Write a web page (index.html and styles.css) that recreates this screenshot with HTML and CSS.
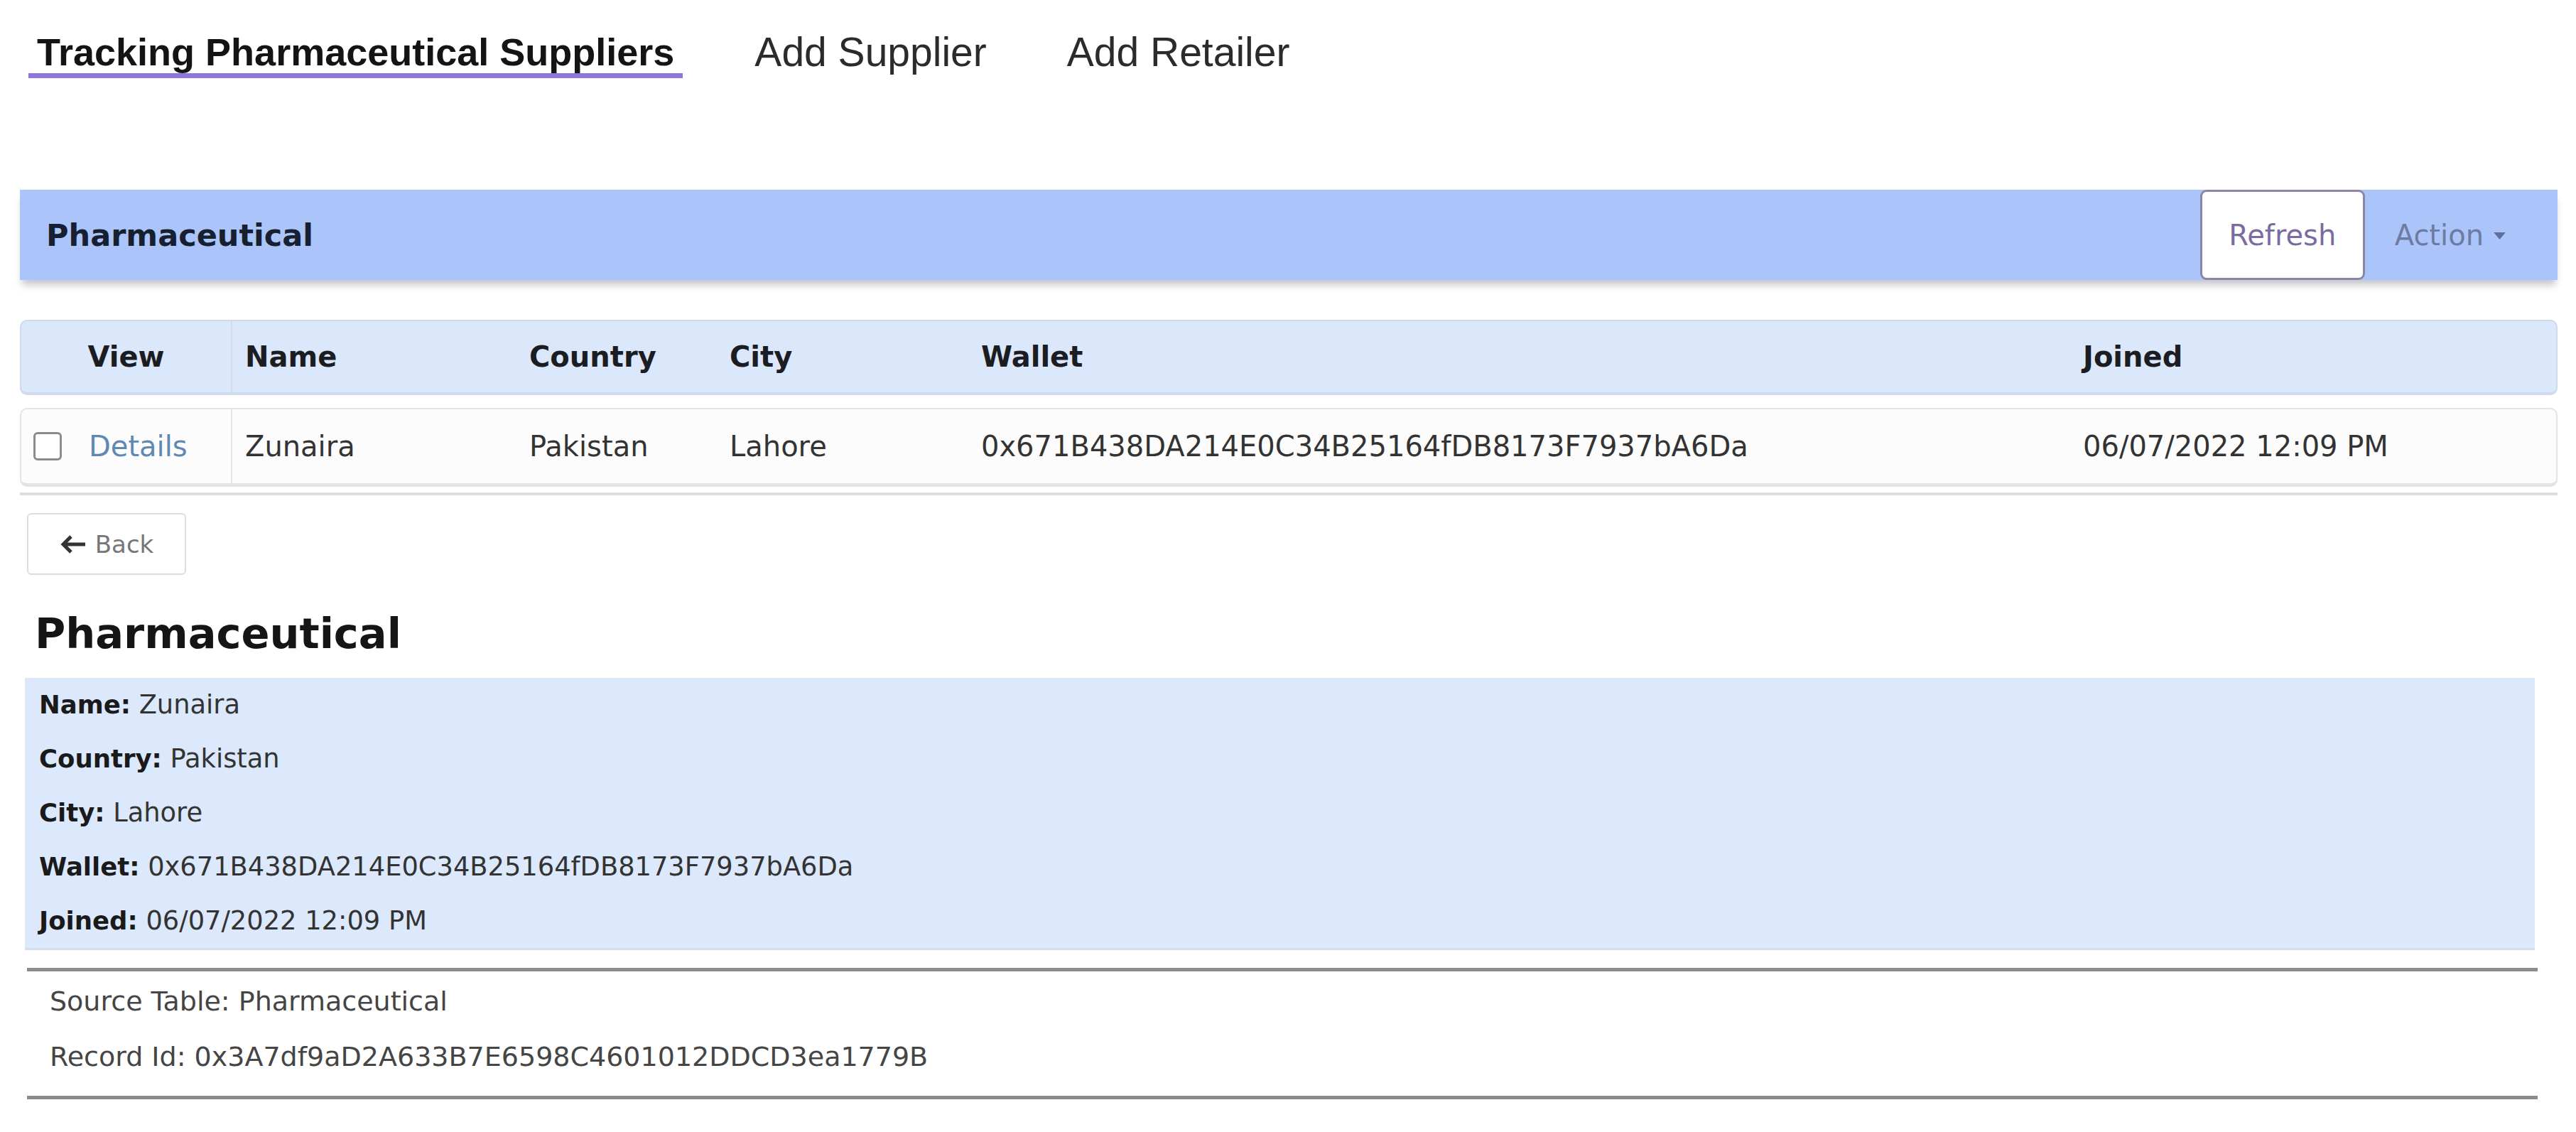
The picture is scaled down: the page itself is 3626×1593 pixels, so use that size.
FILE: index.html
```html
<!DOCTYPE html>
<html lang="en">
<head>
<meta charset="utf-8">
<title>Tracking Pharmaceutical Suppliers</title>
<link rel="stylesheet" href="styles.css">
</head>
<body>
<nav class="nav">
  <a class="nav-item active">Tracking Pharmaceutical Suppliers</a>
  <a class="nav-item">Add Supplier</a>
  <a class="nav-item">Add Retailer</a>
</nav>

<main class="panel">
  <header class="bar">
    <h1 class="bar-title">Pharmaceutical</h1>
    <div class="bar-actions">
      <button class="refresh">Refresh</button>
      <button class="action">Action
        <svg class="caret" viewBox="0 0 10 6" width="17" height="10"><path d="M0 0h10L5 6z" fill="#5f6f99"/></svg>
      </button>
    </div>
  </header>

  <section class="table">
    <div class="trow thead">
      <div class="cell view">View</div>
      <div class="cell">Name</div>
      <div class="cell">Country</div>
      <div class="cell">City</div>
      <div class="cell">Wallet</div>
      <div class="cell">Joined</div>
    </div>
    <div class="trow tbody">
      <div class="cell view left"><span class="check"></span><a class="details">Details</a></div>
      <div class="cell">Zunaira</div>
      <div class="cell">Pakistan</div>
      <div class="cell">Lahore</div>
      <div class="cell">0x671B438DA214E0C34B25164fDB8173F7937bA6Da</div>
      <div class="cell">06/07/2022 12:09 PM</div>
    </div>
    <div class="table-rule"></div>
  </section>

  <button class="back">
    <svg class="back-arrow" viewBox="0 0 38 30" width="38" height="30"><path d="M36 15H6M16 4L5 15l11 11" fill="none" stroke="#333" stroke-width="5"/></svg>
    <span>Back</span>
  </button>

  <h2 class="detail-title">Pharmaceutical</h2>

  <div class="detail-box">
    <p><b>Name:</b> Zunaira</p>
    <p><b>Country:</b> Pakistan</p>
    <p><b>City:</b> Lahore</p>
    <p><b>Wallet:</b> 0x671B438DA214E0C34B25164fDB8173F7937bA6Da</p>
    <p><b>Joined:</b> 06/07/2022 12:09 PM</p>
  </div>

  <div class="source">
    <p>Source Table: Pharmaceutical</p>
    <p>Record Id: 0x3A7df9aD2A633B7E6598C4601012DDCD3ea1779B</p>
  </div>
</main>
</body>
</html>
```

FILE: styles.css
```css
* { box-sizing: border-box; }

body {
  margin: 0;
  background: #ffffff;
  font-family: "DejaVu Sans", "Liberation Sans", sans-serif;
  color: #2a2a2a;
}

/* ---------- top navigation ---------- */
.nav {
  display: flex;
  gap: 89px;
  padding: 46px 0 0 40px;
}

.nav-item {
  font-family: "Liberation Sans", Arial, sans-serif;
  font-size: 57px;
  line-height: 54px;
  color: #2b2b2b;
  padding: 0 12px 3px;
  border-bottom: 7px solid transparent;
  white-space: nowrap;
}

.nav-item.active {
  font-weight: 700;
  font-size: 54px;
  color: #141414;
  border-bottom-color: #8e74dc;
}

/* ---------- panel ---------- */
.panel {
  margin: 157px 26px 0 28px;
}

.bar {
  height: 127px;
  display: flex;
  align-items: center;
  justify-content: space-between;
  padding-left: 37px;
  background: #abc5fa;
  box-shadow: 0 10px 10px -3px rgba(60, 70, 90, 0.3);
}

.bar-title {
  margin: 0;
  font-size: 43px;
  font-weight: 700;
  color: #172031;
}

.bar-actions {
  display: flex;
  align-self: stretch;
  align-items: stretch;
}

.refresh {
  width: 232px;
  font-family: inherit;
  font-size: 40px;
  color: #7a6ca3;
  background: #ffffff;
  border: 3px solid #8b86a8;
  border-radius: 9px;
}

.action {
  display: flex;
  align-items: center;
  gap: 14px;
  padding: 0 73px 0 42px;
  font-family: inherit;
  font-size: 40px;
  color: #6d7ba3;
  background: transparent;
  border: none;
}

.caret { margin-top: 2px; }

/* ---------- table ---------- */
.table {
  margin-top: 56px;
}

.trow {
  display: grid;
  grid-template-columns: 297px 400px 282px 354px 1551px 1fr;
  align-items: stretch;
  border-radius: 10px;
  font-size: 40px;
}

.thead {
  height: 106px;
  background: #dbe7fb;
  border: 2px solid #d0daea;
  border-bottom-width: 4px;
  font-weight: 700;
  color: #1b1d22;
}

.tbody {
  margin-top: 18px;
  height: 111px;
  background: #fcfcfc;
  border: 2px solid #e3e3e3;
  border-bottom-width: 5px;
  color: #333333;
}

.cell {
  display: flex;
  align-items: center;
  padding-left: 18px;
  white-space: nowrap;
}

.cell.view {
  justify-content: center;
  padding-left: 0;
  border-right: 2px solid #d3dbe8;
}

.tbody .cell.view {
  border-right-color: #e6e6e6;
}

.cell.view.left {
  justify-content: flex-start;
  padding-left: 17px;
}

.check {
  width: 40px;
  height: 40px;
  border: 3px solid #8c8c8c;
  border-radius: 6px;
  background: #ffffff;
  margin-right: 38px;
}

.details {
  color: #5f89b3;
}

.table-rule {
  margin-top: 8px;
  border-top: 4px solid #dedede;
}

/* ---------- back button ---------- */
.back {
  display: flex;
  align-items: center;
  justify-content: center;
  gap: 12px;
  width: 224px;
  height: 87px;
  margin: 25px 0 0 10px;
  background: #ffffff;
  border: 2px solid #dddddd;
  border-radius: 6px;
  font-family: inherit;
  font-size: 34px;
  color: #777777;
}

/* ---------- detail view ---------- */
.detail-title {
  margin: 53px 0 0 21px;
  font-size: 59px;
  line-height: 59px;
  font-weight: 700;
  color: #151515;
}

.detail-box {
  margin: 33px 32px 0 7px;
  padding-left: 20px;
  background: #dce8fb;
  border-bottom: 3px solid #d5deec;
}

.detail-box p {
  margin: 0;
  font-size: 36.8px;
  line-height: 76px;
  color: #333333;
}

.detail-box b {
  font-size: 35.5px;
  color: #1a1a1a;
}

.source {
  margin: 25px 28px 0 10px;
  padding: 3px 0 16px 32px;
  border-top: 5px solid #8c8c8c;
  border-bottom: 5px solid #8c8c8c;
}

.source p {
  margin: 0;
  font-size: 38px;
  line-height: 78px;
  color: #454545;
}
```
